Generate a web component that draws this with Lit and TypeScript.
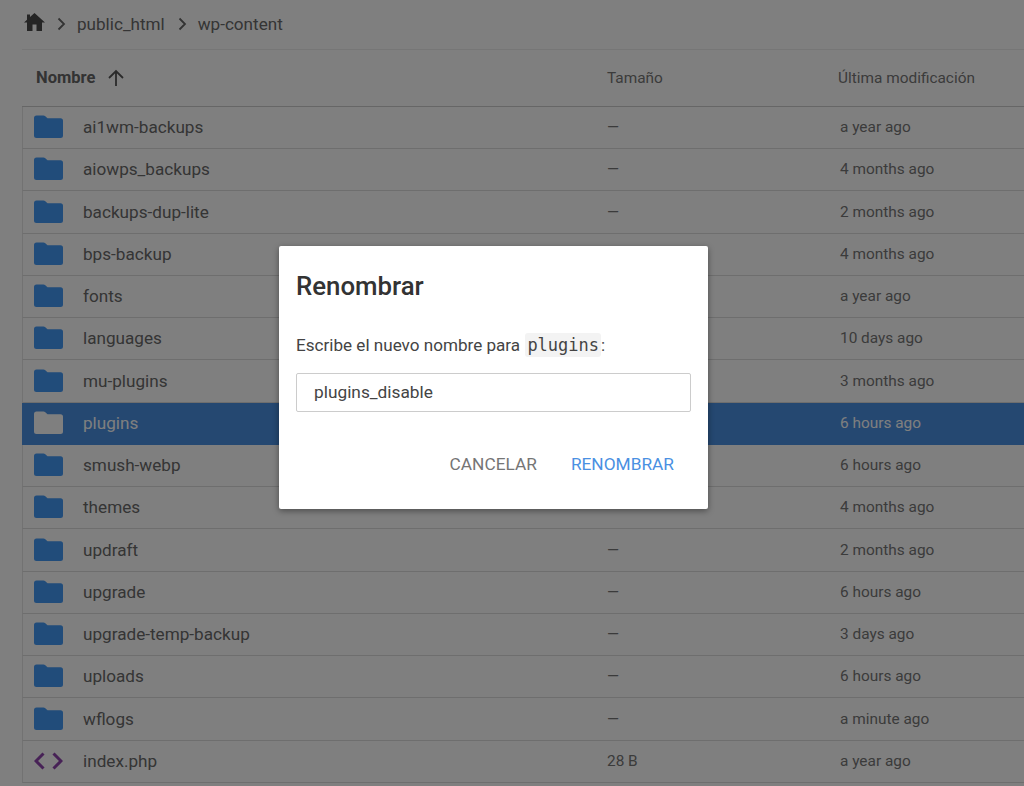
import { LitElement, html, css, svg } from "lit";
import { customElement } from "lit/decorators.js";

const rows: [string, string, string][] = [
  ["ai1wm-backups", "—", "a year ago"],
  ["aiowps_backups", "—", "4 months ago"],
  ["backups-dup-lite", "—", "2 months ago"],
  ["bps-backup", "", "4 months ago"],
  ["fonts", "", "a year ago"],
  ["languages", "", "10 days ago"],
  ["mu-plugins", "", "3 months ago"],
  ["plugins", "", "6 hours ago"],
  ["smush-webp", "", "6 hours ago"],
  ["themes", "", "4 months ago"],
  ["updraft", "—", "2 months ago"],
  ["upgrade", "—", "6 hours ago"],
  ["upgrade-temp-backup", "—", "3 days ago"],
  ["uploads", "—", "6 hours ago"],
  ["wflogs", "—", "a minute ago"],
  ["index.php", "28 B", "a year ago"],
];

const folder = svg`<svg class="icon" viewBox="0 0 29 24" width="29" height="24"><path d="M2.500 .500H9.500Q10.500 .500 11.300 1.200L13.500 3.300H26.500A2.500 2.500 0 0 1 29 5.800V20.500A2.500 2.500 0 0 1 26.500 23H2.500A2.500 2.500 0 0 1 0 20.500V3A2.500 2.500 0 0 1 2.500 .500Z" fill="currentColor"/></svg>`;
const code = svg`<svg class="icon code" viewBox="0 0 29 24" width="29" height="24"><path d="M9.500 4.500 2 12 9.500 19.500M19.500 4.500 27 12 19.500 19.500" fill="none" stroke="currentColor" stroke-width="3"/></svg>`;

@customElement("app-root")
export class AppRoot extends LitElement {
  static styles = css`
    :host { display: block; height: 786px; overflow: hidden; position: relative; background: #fff; font-family: Roboto, sans-serif; color: #333; font-size: 17px; }
    .crumbs { height: 50px; box-sizing: border-box; margin-left: 22px; padding: 0 0 2px 2px; display: flex; align-items: center; gap: 11px; border-bottom: 1px solid #ededed; color: #6a6a6a; font-size: 17.100px; }
    .crumbs svg { flex: none; display: block; }
    .crumbs .home { margin: -3px 1px 0 0; color: #4a4a4a; }
    .crumbs .chev { color: #666; }
    .crumbs span { margin-right: 2px; }
    .table { margin-left: 22px; }
    .head, .row { display: grid; grid-template-columns: 585px 231px 1fr; align-items: center; box-sizing: border-box; }
    .head { height: 56.750px; border-bottom: 1px solid #ccc; font-size: 15.400px; color: #777; }
    .sort { display: flex; align-items: center; gap: 12px; padding-left: 14px; font-size: 16.500px; font-weight: 700; color: #666; }
    .row { height: 42.250px; padding-bottom: 0.600px; border-bottom: 1px solid #dcdcdc; border-left: 1px solid #e4e4e4; grid-template-columns: 584px 231px 1fr; color: #777; }
    .name { display: flex; align-items: center; gap: 20px; padding-left: 11px; font-size: 17.150px; color: #6a6a6a; }
    .icon { color: #4298f4; flex: none; display: block; }
    .code { color: #8e44ad; }
    .size, .date { font-size: 15.400px; }
    .date { padding-left: 2px; }
    .row.sel { background: #4a90e2; border-bottom-color: #4a90e2; border-left-color: #4a90e2; color: #fff; }
    .row.sel .name { color: #fff; }
    .row.sel .icon { color: #fff; }
    .scrim { position: absolute; inset: 0; background: rgba(0, 0, 0, 0.5); }
    .dialog { position: absolute; left: 279px; top: 246px; width: 429px; height: 263px; box-sizing: border-box; background: #fff; border-radius: 2px; padding: 24px 17px 0; box-shadow: 0 2px 6px rgba(0, 0, 0, 0.4); display: flex; flex-direction: column; }
    h2 { margin: 0; font-size: 25.800px; line-height: 32px; font-weight: 500; color: #333; }
    .prompt { margin: 29px 0 0; font-size: 17.100px; line-height: 28px; color: #444; }
    code { font-family: "DejaVu Sans Mono", monospace; font-size: 17px; background: #f3f3f3; border-radius: 3px; padding: 2px 2px; margin-left: 1px; }
    .input { margin-top: 14px; height: 39px; box-sizing: border-box; border: 1px solid #ccc; border-radius: 2px; padding: 0 0 2px 17px; display: flex; align-items: center; font-size: 17.300px; color: #444; }
    .actions { display: flex; justify-content: flex-end; gap: 34px; margin-top: 42px; padding-right: 17px; font-size: 17.300px; }
    .cancel { color: #757575; }
    .ok { color: #4a90e2; }
  `;

  render() {
    return html`
      <div class="crumbs">
        <svg class="home" width="21" height="18" viewBox="0 0 21 18"><path d="M10.500 0 21 9.500H18V18H12.500V11.500H8.500V18H3V9.500H0L3 6.800V1.500H6V4.100Z" fill="currentColor"/></svg>
        <svg class="chev" width="9" height="14" viewBox="0 0 9 14"><path d="M1.500 1.500 7 7 1.500 12.500" fill="none" stroke="currentColor" stroke-width="1.800"/></svg>
        <span>public_html</span>
        <svg class="chev" width="9" height="14" viewBox="0 0 9 14"><path d="M1.500 1.500 7 7 1.500 12.500" fill="none" stroke="currentColor" stroke-width="1.800"/></svg>
        <span>wp-content</span>
      </div>
      <div class="table">
        <div class="head">
          <div class="sort">Nombre
            <svg width="18" height="18" viewBox="0 0 18 18"><path d="M9 17V2M2 9 9 2l7 7" fill="none" stroke="#555" stroke-width="1.800"/></svg>
          </div>
          <div>Tamaño</div>
          <div>Última modificación</div>
        </div>
        ${rows.map(([n, s, d]) => html`
          <div class="row ${n === "plugins" ? "sel" : ""}">
            <div class="name">${n.endsWith(".php") ? code : folder}<span>${n}</span></div>
            <div class="size">${s}</div>
            <div class="date">${d}</div>
          </div>`)}
      </div>
      <div class="scrim"></div>
      <div class="dialog">
        <h2>Renombrar</h2>
        <p class="prompt">Escribe el nuevo nombre para <code>plugins</code>:</p>
        <div class="input">plugins_disable</div>
        <div class="actions"><span class="cancel">CANCELAR</span><span class="ok">RENOMBRAR</span></div>
      </div>
    `;
  }
}
